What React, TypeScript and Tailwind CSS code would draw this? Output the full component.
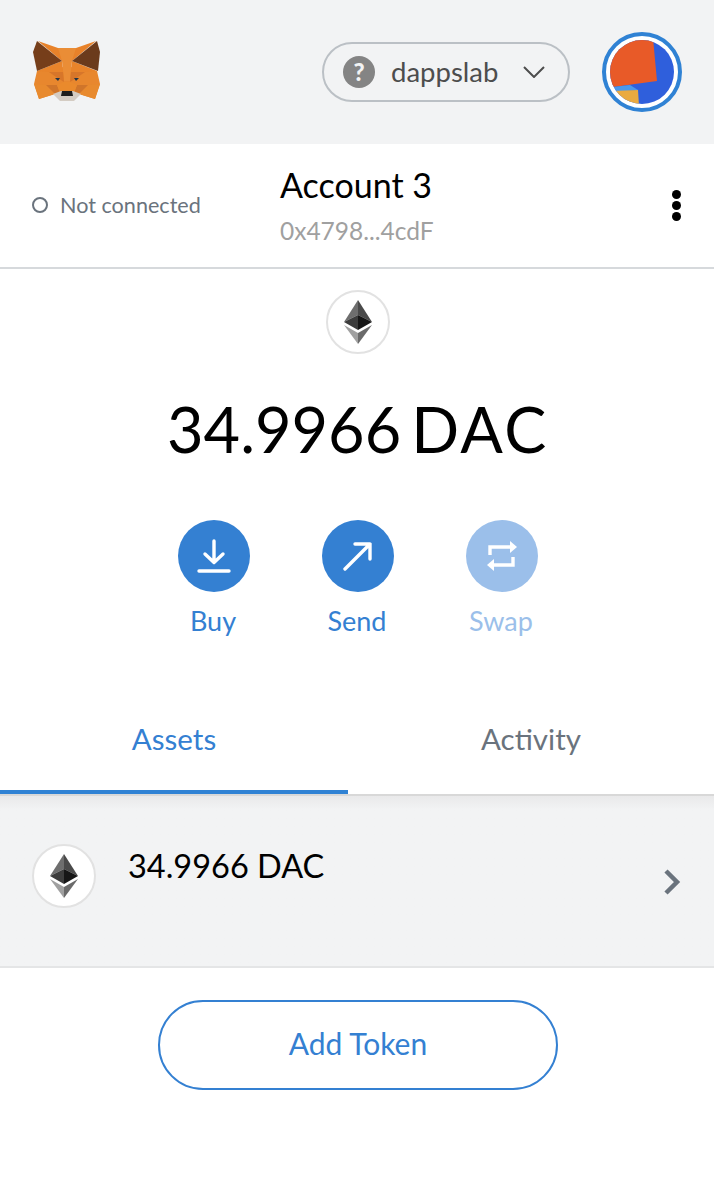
const font = "font-['Lato','Liberation_Sans',sans-serif]"

function Fox() {
  return (
    <svg width="68" height="62" viewBox="0 0 68 62">
      <polygon points="1,43 4,30 16,30 30,26 38,26 52,30 64,30 67,43 62,58 46,53 22,53 6,58" fill="#e8872e" />
      <polygon points="5,0 25,7 43,7 63,0 39,20 29,20" fill="#e8822a" />
      <polygon points="25,7 43,7 39,20 37,40 31,40 29,20" fill="#ea8d36" />
      <polygon points="29,20 4,30 16,31 31,40" fill="#e8842b" />
      <polygon points="39,20 64,30 52,31 37,40" fill="#e8842b" />
      <polygon points="4,0 29,20 4,30 0,11" fill="#763e1a" />
      <polygon points="64,0 39,20 65,30 67,11" fill="#6b3b1c" />
      <polygon points="16,31 30,31 31,41 23,36" fill="#d7762a" />
      <polygon points="52,31 38,31 37,41 45,36" fill="#d7762a" />
      <polygon points="1,43 13,44 22,53 6,58" fill="#e88a2e" />
      <polygon points="67,43 55,44 46,53 62,58" fill="#e88a2e" />
      <polygon points="13,44 24,44 27,52 22,53" fill="#d0752a" />
      <polygon points="55,44 44,44 41,52 46,53" fill="#d0752a" />
      <polygon points="24,44 31,41 37,41 44,44 41,52 27,52" fill="#ea8a2c" />
      <polygon points="20,53 28,50 40,50 48,53 41,60 27,60" fill="#d4ccc3" />
      <polygon points="29,50 39,50 40,55 28,55" fill="#1e1e1e" />
      <polygon points="22,37 27,37 25,40" fill="#233447" />
      <polygon points="46,37 41,37 43,40" fill="#233447" />
    </svg>
  )
}

function Avatar() {
  return (
    <svg width="64" height="64" viewBox="0 0 64 64" className="rounded-full">
      <rect width="64" height="64" fill="#2f5fdc" />
      <polygon points="-2,-2 43,-2 47,41 3,47 -2,50" fill="#e85a28" />
      <polygon points="3,47 20,45 28,50 6,52" fill="#4a98ec" />
      <polygon points="2,51 28,50 29,66 2,66" fill="#eaaa40" />
    </svg>
  )
}

function EthIcon({ className }: { className: string }) {
  return (
    <div className={`flex items-center justify-center rounded-full border-2 border-[#e2e2e2] bg-white ${className}`}>
      <svg width="28" height="44" viewBox="0 0 28 44">
        <polygon points="14,0 0,22 14,15" fill="#6e6e6e" />
        <polygon points="14,0 28,22 14,15" fill="#4a4a4a" />
        <polygon points="14,15 0,22 14,30" fill="#3c3c3c" />
        <polygon points="14,15 28,22 14,30" fill="#161616" />
        <polygon points="0,25 14,33 14,44" fill="#a0a0a0" />
        <polygon points="28,25 14,33 14,44" fill="#6a6a6a" />
      </svg>
    </div>
  )
}

function ActionButton({ label, muted, children }: { label: string; muted?: boolean; children: React.ReactNode }) {
  return (
    <div className="flex w-[72px] flex-col items-center">
      <div className={`flex h-[72px] w-[72px] items-center justify-center rounded-full ${muted ? "bg-[#9bbfea]" : "bg-[#3480d2]"}`}>
        {children}
      </div>
      <span className={`mt-[12px] -translate-x-px text-[27px] leading-[34px] ${muted ? "text-[#9bbfea]" : "text-[#3480d2]"}`}>{label}</span>
    </div>
  )
}

export default function App() {
  return (
    <div className={`flex h-[1196px] w-[714px] flex-col bg-white ${font}`}>
      <header className="flex h-[144px] items-center bg-[#f2f3f4] pl-[33px] pr-[32px]">
        <Fox />
        <div className="ml-[221px] flex h-[60px] w-[248px] items-center rounded-full border-2 border-[#bbc0c5] pl-[19px]">
          <div className="flex h-[32px] w-[32px] items-center justify-center rounded-full bg-[#848484] text-[24px] font-black leading-none text-[#f2f3f4]">?</div>
          <span className="ml-[16px] text-[27.5px] text-[#4d4d4d]">dappslab</span>
          <svg className="ml-[25px]" width="22" height="12" viewBox="0 0 22 12" fill="none" stroke="#4d4d4d" strokeWidth="2">
            <path d="M1 1L11 11L21 1" />
          </svg>
        </div>
        <div className="ml-[32px] flex h-[80px] w-[80px] items-center justify-center rounded-full border-[4px] border-[#3082d4] bg-white">
          <Avatar />
        </div>
      </header>

      <section className="flex h-[125px] items-center border-b-2 border-[#d6d9dc] pl-[32px] pr-[33px]">
        <div className="flex w-[240px] items-center">
          <span className="h-[16px] w-[16px] rounded-full border-2 border-[#6a737d]" />
          <span className="ml-[12px] text-[21.6px] text-[#6a737d]">Not connected</span>
        </div>
        <div className="flex flex-1 flex-col items-start pl-[8px]">
          <span className="text-[34px] leading-[42px] text-black">Account 3</span>
          <span className="mt-[9px] text-[24.5px] leading-[32px] text-[#a0a0a0]">0x4798...4cdF</span>
        </div>
        <div className="flex flex-col gap-[2px]">
          <span className="h-[9px] w-[9px] rounded-full bg-black" />
          <span className="h-[9px] w-[9px] rounded-full bg-black" />
          <span className="h-[9px] w-[9px] rounded-full bg-black" />
        </div>
      </section>

      <section className="flex flex-col items-center pl-[2px] pt-[21px]">
        <EthIcon className="h-[64px] w-[64px]" />
        <div className="mt-[39px] flex gap-[10px] text-[63px] leading-[72px] text-black">
          <span>34.9966</span>
          <span className="tracking-[2.5px]">DAC</span>
        </div>
        <div className="mt-[55px] flex gap-[72px]">
          <ActionButton label="Buy">
            <svg width="36" height="36" viewBox="0 0 36 36" fill="none" stroke="white" strokeWidth="3.4" strokeLinecap="round" strokeLinejoin="round">
              <path d="M18 3V24M9 16L18 24.5L27 16M3 33H33" />
            </svg>
          </ActionButton>
          <ActionButton label="Send">
            <svg width="30" height="30" viewBox="0 0 30 30" fill="none" stroke="white" strokeWidth="3.4" strokeLinecap="round" strokeLinejoin="round">
              <path d="M2 28L27 3M12 3H27V18" />
            </svg>
          </ActionButton>
          <ActionButton label="Swap" muted>
            <svg width="34" height="32" viewBox="0 0 34 32" fill="none" stroke="white" strokeWidth="3.4">
              <path d="M5 15V7H28M28 17V25H5" />
              <path d="M25 1L32 7L25 13Z" fill="white" stroke="none" />
              <path d="M9 19L2 25L9 31Z" fill="white" stroke="none" />
            </svg>
          </ActionButton>
        </div>
      </section>

      <nav className="mt-[64px] flex h-[92px]">
        <div className="flex w-[348px] items-center justify-center border-b-[4px] border-[#3082d4] pb-[13px] text-[29.5px] text-[#3480d2]">Assets</div>
        <div className="flex flex-1 items-center justify-center pb-[17px] text-[29.5px] text-[#6a737d]">Activity</div>
      </nav>

      <section className="flex h-[174px] items-start border-y-2 border-b-[#e4e5e6] border-t-[#d8d8d8] bg-[#f2f3f4] bg-gradient-to-b from-[#e9e9ea] to-[#f2f3f4] to-[8%] pl-[32px] pr-[32px] pt-[48px]">
        <EthIcon className="h-[64px] w-[64px]" />
        <span className="ml-[32px] mt-[2px] text-[32.5px] leading-[40px] text-black">34.9966 DAC</span>
        <svg className="ml-auto mr-[1px] mt-[25px]" width="18" height="26" viewBox="0 0 18 26" fill="none" stroke="#6a737d" strokeWidth="4.5">
          <path d="M3 2L14 13L3 24" />
        </svg>
      </section>

      <div className="flex justify-center pl-[2px] pt-[32px]">
        <button className="h-[90px] w-[400px] rounded-[45px] border-2 border-[#3480d2] pb-[3px] text-[30px] text-[#3480d2]">Add Token</button>
      </div>
    </div>
  )
}
